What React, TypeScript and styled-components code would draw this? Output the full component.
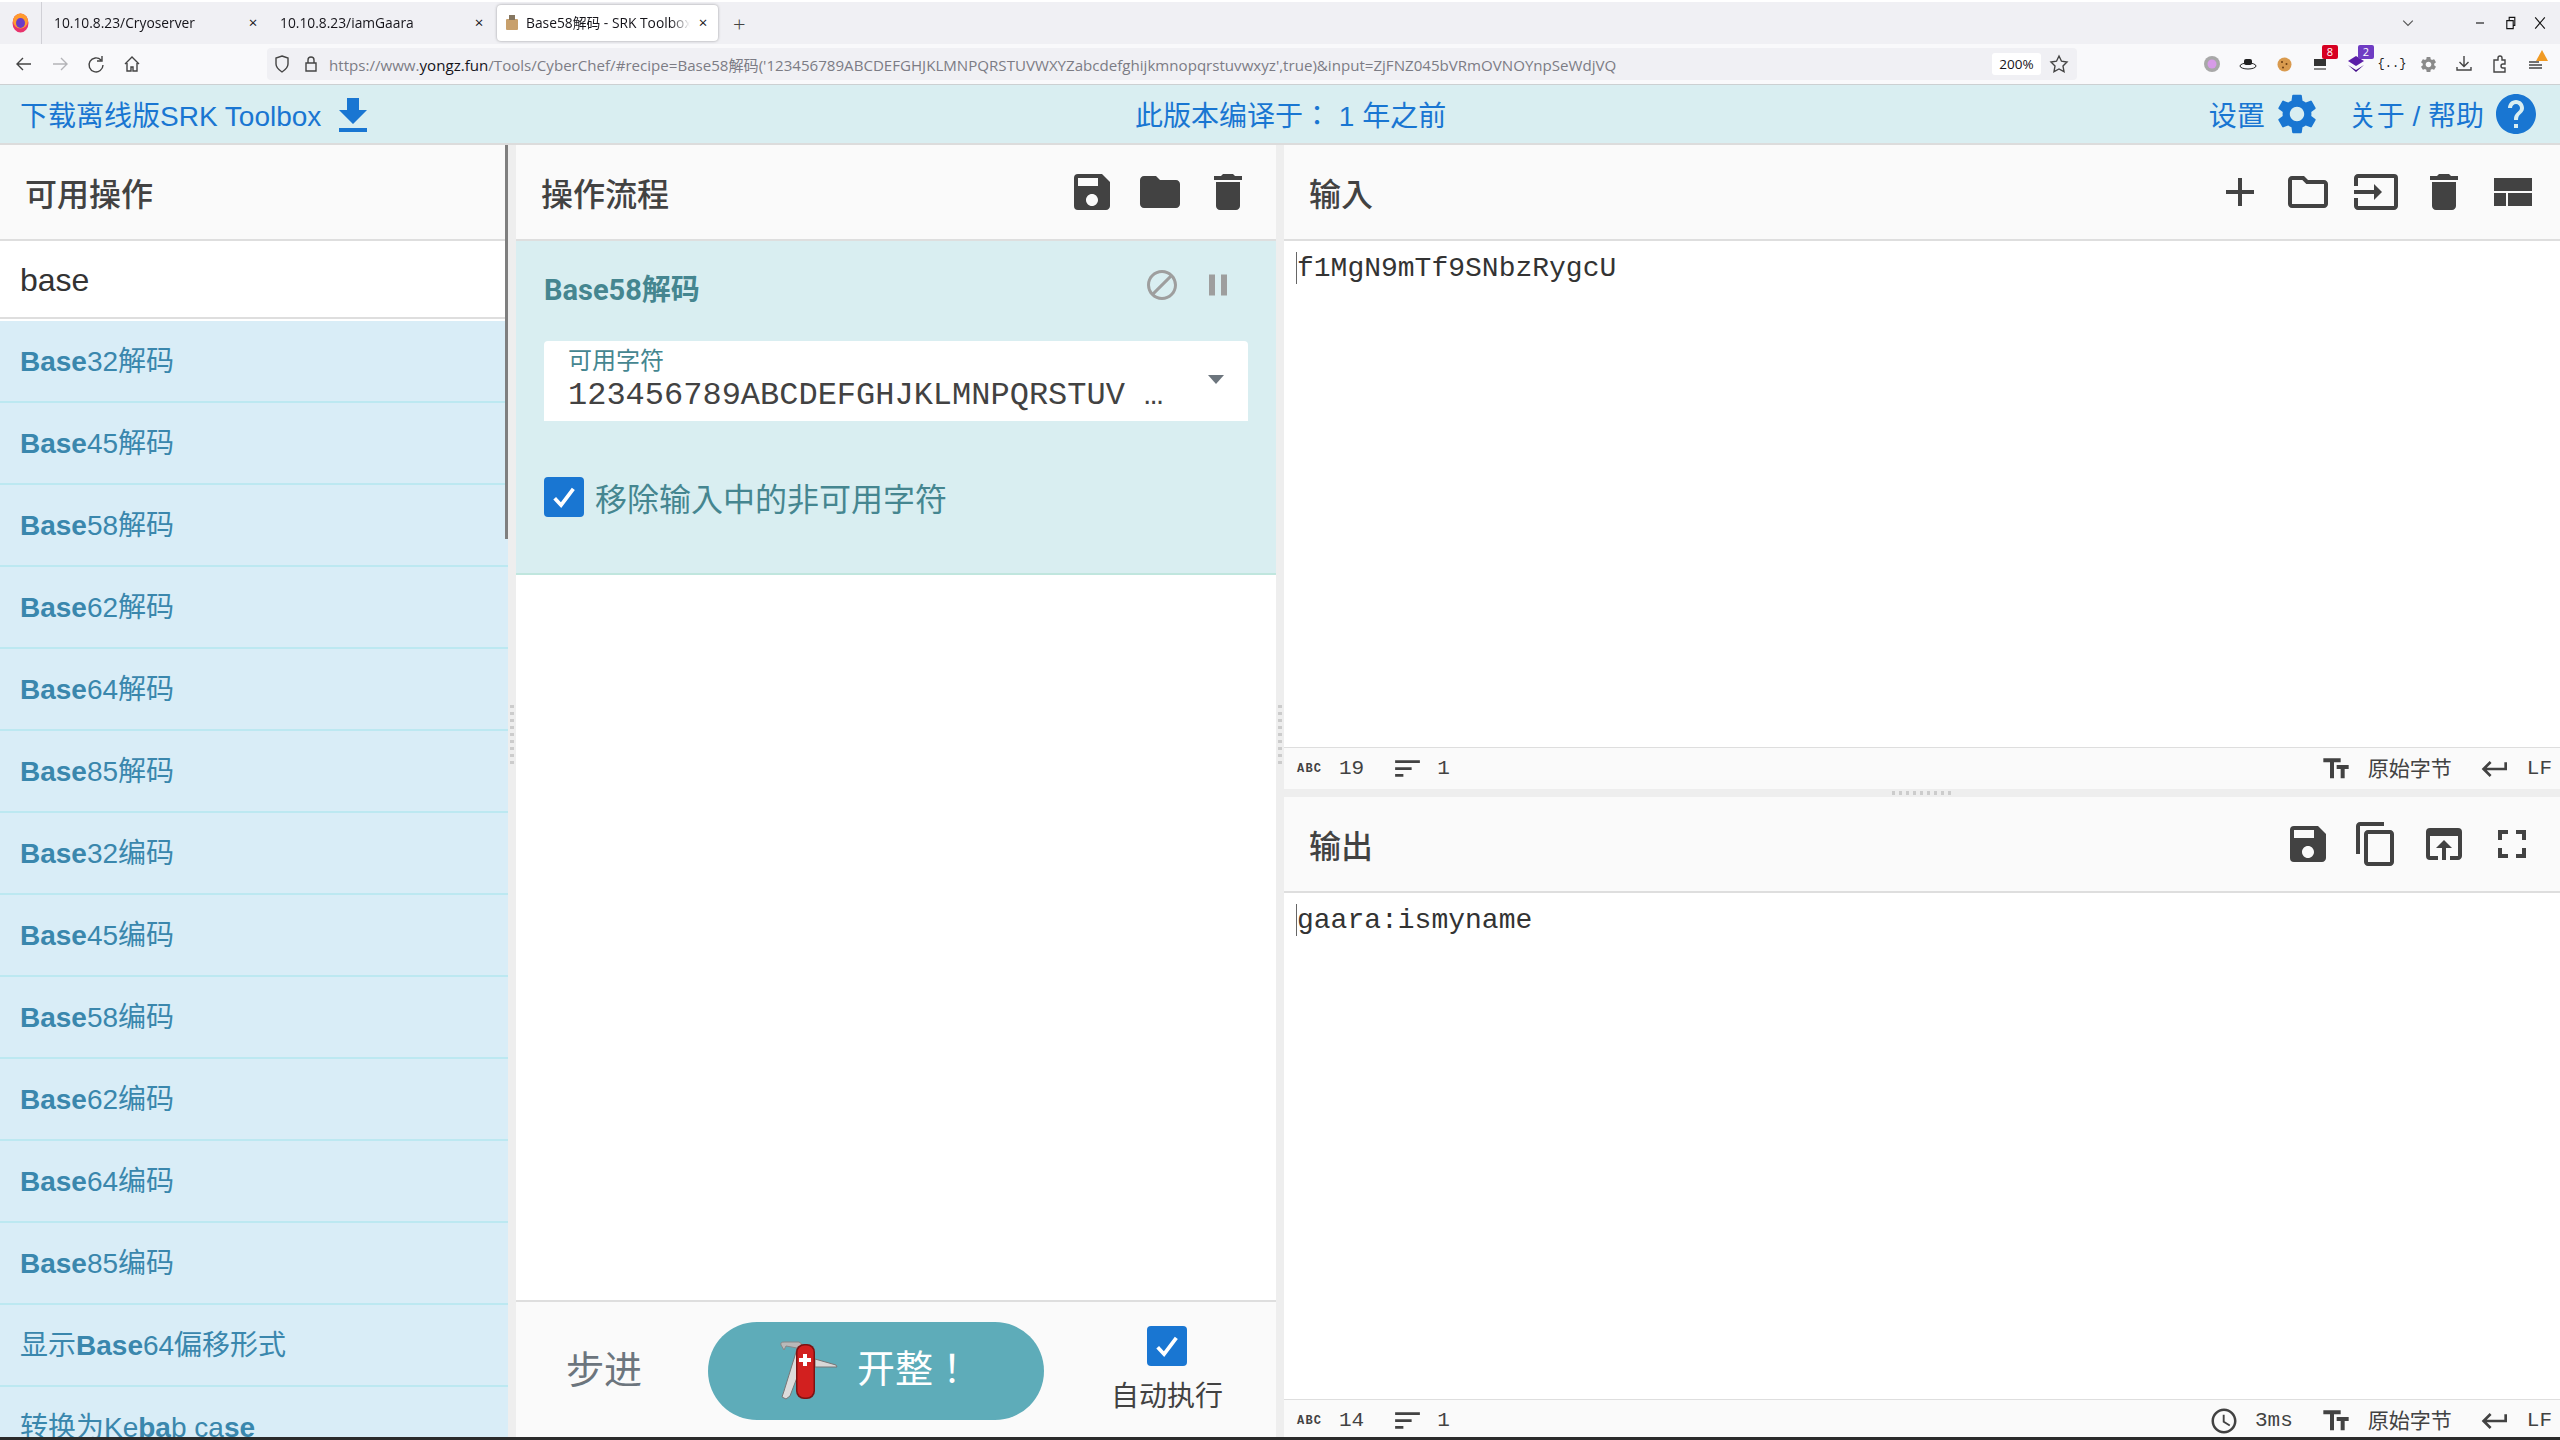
import React from 'react';
import styled, { createGlobalStyle } from 'styled-components';
import {
  MdAccessTime,
  MdAdd,
  MdBlock,
  MdContentCopy,
  MdDelete,
  MdFileDownload,
  MdFolder,
  MdFullscreen,
  MdHelp,
  MdInput,
  MdKeyboardReturn,
  MdOpenInBrowser,
  MdOutlineFolder,
  MdPause,
  MdSave,
  MdSettings,
  MdSort,
  MdTextFields,
} from 'react-icons/md';

const UI_FONT = '"Liberation Sans", "Noto Sans CJK JP", sans-serif';
const TITLE_FONT = 'Roboto, "Noto Sans CJK JP", sans-serif';
const MONO_FONT = '"Liberation Mono", "Noto Sans CJK JP", monospace';
const CHROME_FONT = '"Open Sans", "Noto Sans CJK JP", sans-serif';

const GlobalStyle = createGlobalStyle`
  html, body {
    margin: 0;
    padding: 0;
    background: #fff;
  }
`;

const Page = styled.div`
  width: 2560px;
  height: 1440px;
  overflow: hidden;
  display: flex;
  flex-direction: column;
  font-family: ${UI_FONT};
  background: #2b2b2b;
`;

/* browser chrome */
const TabStrip = styled.div`
  height: 44px;
  flex-shrink: 0;
  display: flex;
  align-items: center;
  background: #f0f0f4;
  border-top: 2px solid #fff;
  box-sizing: border-box;
  font-family: ${CHROME_FONT};
  font-size: 13.8px;
  color: #15141a;
`;

const FirefoxCell = styled.div`
  width: 42px;
  height: 42px;
  box-sizing: border-box;
  display: flex;
  align-items: center;
  justify-content: center;
  border-right: 1px solid #d0d0d6;
`;

const Tab = styled.div<{ $active?: boolean }>`
  width: ${(p) => (p.$active ? '221px' : '226px')};
  height: 36px;
  margin-left: ${(p) => (p.$active ? '3px' : '0')};
  padding: 0 9px 2px ${(p) => (p.$active ? '8px' : '12px')};
  box-sizing: border-box;
  display: flex;
  align-items: center;
  gap: 7px;
  border-radius: 4px;
  background: ${(p) => (p.$active ? '#fff' : 'transparent')};
  box-shadow: ${(p) => (p.$active ? '0 0 3px rgba(0,0,0,0.35)' : 'none')};
`;

const TabTitle = styled.span`
  flex: 1;
  white-space: nowrap;
  overflow: hidden;
  mask-image: linear-gradient(to right, #000 88%, transparent);
`;

const TabClose = styled.span`
  font-size: 15px;
  line-height: 1;
  width: 12px;
  text-align: center;
`;

const NewTab = styled.span`
  margin-left: 15px;
  font-size: 22px;
  font-weight: 300;
  color: #444;
`;

const WindowControls = styled.div`
  margin-left: auto;
  display: flex;
  align-items: center;
  padding-right: 5px;
`;

const ToolBar = styled.div`
  height: 40px;
  flex-shrink: 0;
  display: flex;
  align-items: center;
  background: #f9f9fb;
  border-bottom: 1px solid #ccd0d2;
  box-sizing: content-box;
`;

const NavIcon = styled.span<{ $narrow?: boolean; $trail?: number }>`
  width: ${(p) => (p.$narrow ? '30px' : '36px')};
  height: 24px;
  margin-right: ${(p) => p.$trail ?? 0}px;
  display: flex;
  align-items: center;
  justify-content: center;
`;

const NavIcons = styled.div`
  display: flex;
  width: 267px;
  padding-left: 6px;
  box-sizing: border-box;
`;

const UrlBar = styled.div`
  width: 1810px;
  height: 32px;
  box-sizing: border-box;
  padding: 0 8px 0 5px;
  display: flex;
  align-items: center;
  background: #f0f0f4;
  border-radius: 4px;
`;

const UrlSpacer = styled.span<{ $width: number }>`
  width: ${(p) => p.$width}px;
  flex-shrink: 0;
`;

const UrlText = styled.span`
  flex: 1;
  min-width: 0;
  margin-left: 8px;
  font-family: ${CHROME_FONT};
  font-size: 15.1px;
  color: #7c7c85;
  white-space: nowrap;
  overflow: hidden;

  b {
    font-weight: 400;
    color: #15141a;
  }
`;

const ZoomBadge = styled.span`
  width: 49px;
  height: 22px;
  display: flex;
  align-items: center;
  justify-content: center;
  background: #fff;
  border-radius: 3px;
  font-family: ${CHROME_FONT};
  font-size: 13.5px;
  color: #15141a;
`;

const Extensions = styled.div`
  display: flex;
  align-items: center;
  margin-left: 123px;
  gap: 12px;
`;

const ExtIcon = styled.span`
  position: relative;
  width: 24px;
  height: 24px;
  display: flex;
  align-items: center;
  justify-content: center;
  font-size: 12px;
  color: #222;
  font-family: ${MONO_FONT};
`;

const ExtBadge = styled.span<{ $color: string }>`
  position: absolute;
  top: -7px;
  right: -6px;
  min-width: 14px;
  height: 14px;
  padding: 0 1px;
  border-radius: 2px;
  background: ${(p) => p.$color};
  color: #fff;
  font-family: ${CHROME_FONT};
  font-size: 11px;
  line-height: 14px;
  text-align: center;
`;

const AlertMark = styled.svg`
  position: absolute;
  top: -2px;
  right: 0;
`;

/* app banner */
const Banner = styled.div`
  height: 58px;
  flex-shrink: 0;
  position: relative;
  display: flex;
  align-items: center;
  justify-content: space-between;
  padding: 0 20px 0 20px;
  background: #d9eef1;
  border-bottom: 2px solid #dcdcdc;
  color: #1976d2;
  font-size: 28px;
`;

const BannerGroup = styled.div`
  display: flex;
  align-items: center;
`;

const BannerCentre = styled.div`
  position: absolute;
  left: 1135px;
  top: 0;
  height: 58px;
  display: flex;
  align-items: center;
  white-space: pre;
`;

const BannerLabel = styled.span<{ $lead?: number }>`
  margin-left: ${(p) => p.$lead ?? 0}px;
  margin-right: 8px;
`;

const DownloadIcon = styled(MdFileDownload)`
  margin-top: 4px;
`;

/* main columns */
const Main = styled.div`
  flex: 1;
  min-height: 0;
  display: flex;
  overflow: hidden;
  background: #eee;
`;

const OpsColumn = styled.section`
  position: relative;
  width: 508px;
  flex-shrink: 0;
  display: flex;
  flex-direction: column;
  overflow: hidden;
  background: #fff;
`;

const RecipeColumn = styled.section`
  width: 760px;
  margin: 0 8px;
  flex-shrink: 0;
  display: flex;
  flex-direction: column;
  background: #fff;
`;

const IoColumn = styled.section`
  flex: 1;
  min-width: 0;
  display: flex;
  flex-direction: column;
`;

const Scrollbar = styled.div`
  position: absolute;
  top: 0;
  right: 0;
  width: 3px;
  height: 394px;
  background: #7f7f7f;
`;

const PanelHeader = styled.header`
  height: 94px;
  flex-shrink: 0;
  box-sizing: content-box;
  display: flex;
  align-items: center;
  justify-content: space-between;
  padding: 0 24px 0 25px;
  background: #fafafa;
  border-bottom: 2px solid #dedede;
`;

const PanelTitle = styled.h2`
  margin: 0;
  font-family: ${TITLE_FONT};
  font-size: 32px;
  font-weight: 500;
  color: #424242;
`;

const IconRow = styled.div`
  display: flex;
  gap: 20px;
  color: #424242;

  svg {
    display: block;
    width: 48px;
    height: 48px;
  }
`;

const SearchBox = styled.div`
  height: 74px;
  flex-shrink: 0;
  box-sizing: content-box;
  display: flex;
  align-items: center;
  padding: 2px 0 0 20px;
  border-bottom: 2px solid #dedede;
  font-size: 32px;
  color: #333;
`;

const OpList = styled.ul`
  list-style: none;
  margin: 2px 0 0;
  padding: 0;
`;

const OpItem = styled.li`
  height: 82px;
  box-sizing: border-box;
  padding: 1px 0 0 20px;
  background: #d9edf7;
  border-bottom: 2px solid #bce8f1;
  color: #3a87ad;
  font-size: 28px;
  line-height: 80px;
  white-space: pre;
`;

const RecipeBody = styled.div`
  flex: 1;
  min-height: 0;
`;

const OpCard = styled.div`
  height: 332px;
  box-sizing: content-box;
  background: #d9eef1;
  border-bottom: 2px solid #c0e6de;
  padding: 0 28px;
  display: flex;
  flex-direction: column;
`;

const OpCardHead = styled.div`
  height: 100px;
  display: flex;
  align-items: center;
  justify-content: space-between;
  padding-right: 12px;
`;

const OpName = styled.span`
  font-family: ${TITLE_FONT};
  font-size: 29px;
  font-weight: 700;
  color: #458690;
  position: relative;
  top: -4px;
`;

const OpControls = styled.div`
  display: flex;
  gap: 20px;
  color: #9e9e9e;
  position: relative;
  top: -6px;

  svg {
    display: block;
    width: 36px;
    height: 36px;
  }
`;

const Field = styled.div`
  height: 80px;
  box-sizing: border-box;
  position: relative;
  padding: 7px 24px 0;
  background: #fff;
  border-radius: 4px 4px 0 0;
`;

const FieldLabel = styled.div`
  font-family: ${TITLE_FONT};
  font-size: 24px;
  line-height: 26px;
  color: #458690;
`;

const FieldValue = styled.div`
  margin-top: 4px;
  font-family: ${MONO_FONT};
  font-size: 32px;
  line-height: 36px;
  color: #424242;
  white-space: pre;
`;

const Caret = styled.span`
  position: absolute;
  right: 24px;
  top: 34px;
  width: 0;
  height: 0;
  border-left: 8px solid transparent;
  border-right: 8px solid transparent;
  border-top: 9px solid #6c757d;
`;

const CheckRow = styled.label`
  margin-top: 53px;
  display: flex;
  align-items: center;
  gap: 11px;
  font-family: ${TITLE_FONT};
  font-size: 32px;
  color: #458690;
`;

const CheckMark = styled.span`
  width: 40px;
  height: 40px;
  flex-shrink: 0;
  display: flex;
  align-items: center;
  justify-content: center;
  border-radius: 4px;
  background: #1976d2;
`;

const RecipeFooter = styled.footer`
  height: 135px;
  flex-shrink: 0;
  box-sizing: content-box;
  display: flex;
  align-items: flex-start;
  background: #fafafa;
  border-top: 2px solid #dedede;
  padding-left: 50px;
`;

const StepLabel = styled.span`
  width: 142px;
  margin-top: 46px;
  font-family: ${TITLE_FONT};
  font-size: 38px;
  line-height: 44px;
  color: #6c757d;
`;

const BakeButton = styled.div`
  width: 336px;
  height: 98px;
  margin-top: 20px;
  flex-shrink: 0;
  display: flex;
  align-items: center;
  padding-left: 70px;
  box-sizing: border-box;
  gap: 19px;
  border-radius: 49px;
  background: #5eacb9;
  color: #fff;
  font-family: ${TITLE_FONT};
  font-size: 38px;
`;

const BakeLabel = styled.span`
  position: relative;
  top: -6px;
`;

const AutoBake = styled.div`
  flex: 1;
  margin-top: 24px;
  padding-left: 14px;
  display: flex;
  flex-direction: column;
  align-items: center;
  gap: 12px;
  font-family: ${TITLE_FONT};
  font-size: 28px;
  line-height: 38px;
  color: #424242;
`;

/* input and output */
const IoPanel = styled.div`
  height: 644px;
  flex-shrink: 0;
  display: flex;
  flex-direction: column;
`;

const TextArea = styled.div`
  flex: 1;
  min-height: 0;
  position: relative;
  padding: 9px 0 0 13px;
  background: #fff;
  font-family: ${MONO_FONT};
  font-size: 28px;
  line-height: 38px;
  color: #333;
  white-space: pre;

  &::before {
    content: '';
    position: absolute;
    left: 12px;
    top: 11px;
    width: 1px;
    height: 32px;
    background: #666;
  }
`;

const StatusBar = styled.div`
  height: 41px;
  flex-shrink: 0;
  box-sizing: content-box;
  display: flex;
  align-items: center;
  justify-content: space-between;
  padding: 0 8px 0 13px;
  background: #fafafa;
  border-top: 1px solid #dedede;
  font-family: ${MONO_FONT};
  font-size: 21px;
  color: #424242;
`;

const StatusSide = styled.div`
  display: flex;
  align-items: center;
  gap: 27px;
`;

const StatusItem = styled.span<{ $gap?: number }>`
  display: flex;
  align-items: center;
  gap: ${(p) => p.$gap ?? 16}px;

  svg {
    display: block;
  }
`;

const CjkLabel = styled.span`
  position: relative;
  top: -2px;
`;

const AbcMark = styled.span`
  width: 25px;
  font-size: 12px;
  font-weight: 700;
  letter-spacing: 1.2px;
`;

const SplitGutter = styled.div`
  height: 8px;
  flex-shrink: 0;
  display: flex;
  align-items: center;
  justify-content: center;
  background: #eee;

  &::after {
    content: '';
    width: 60px;
    height: 4px;
    background: repeating-linear-gradient(to right, #ccc 0 3px, transparent 3px 7px);
  }
`;

const ColumnGrip = styled.div<{ $left: number }>`
  position: absolute;
  left: ${(p) => p.$left}px;
  top: 620px;
  width: 4px;
  height: 60px;
  background: repeating-linear-gradient(to bottom, #ccc 0 3px, transparent 3px 7px);
`;

const MainFrame = styled.div`
  position: relative;
  flex: 1;
  min-height: 0;
  display: flex;
  flex-direction: column;
  margin-bottom: 3px;
  overflow: hidden;
`;

const operations: string[][] = [
  ['32', '解码'],
  ['45', '解码'],
  ['58', '解码'],
  ['62', '解码'],
  ['64', '解码'],
  ['85', '解码'],
  ['32', '编码'],
  ['45', '编码'],
  ['58', '编码'],
  ['62', '编码'],
  ['64', '编码'],
  ['85', '编码'],
];

const Tick: React.FC = () => (
  <svg width="28" height="28" viewBox="0 0 24 24" fill="none" stroke="#fff" strokeWidth="3.2">
    <path d="M4 13l5.500 6L20 5" />
  </svg>
);

const LayoutIcon: React.FC = () => (
  <svg viewBox="0 0 48 48" fill="currentColor">
    <rect x="6" y="10" width="38" height="13" />
    <rect x="6" y="25" width="12" height="13" />
    <rect x="20" y="25" width="24" height="13" />
  </svg>
);

const KnifeLogo: React.FC = () => (
  <svg width="60" height="60" viewBox="0 0 60 60">
    <path d="M20 20 L23 10 L19 8 L6 50 L4 56 L8 58 L12 55 L20 34 Z" fill="#dcdcdc" stroke="#777" strokeWidth="1" />
    <path d="M3 4 Q2 1 6 1 L21 1 Q24 2 24 5 L19 7 L8 5 L6 9 Z" fill="#b9b9b9" stroke="#888" strokeWidth="1" />
    <path d="M37 18 L58 24 L59 26 L37 26 Z" fill="#d8d8d8" stroke="#777" strokeWidth="1" />
    <rect x="18" y="3" width="19" height="55" rx="8" fill="#7e1212" />
    <rect x="19.500" y="4.500" width="16" height="52" rx="7" fill="#d2201f" />
    <path d="M25 13h4v4h4v4h-4v4h-4v-4h-4v-4h4z" fill="#fff" />
  </svg>
);

const FirefoxLogo: React.FC = () => (
  <svg width="17" height="20" viewBox="0 0 17 20">
    <ellipse cx="8.500" cy="10" rx="8" ry="9.500" fill="#e8336c" />
    <ellipse cx="8.500" cy="8" rx="7.500" ry="7.500" fill="#ff9a2e" />
    <ellipse cx="8.500" cy="10" rx="4.500" ry="5" fill="#6b3bc7" />
  </svg>
);

const Line: React.FC<{ d: string; stroke?: string; size?: number }> = ({ d, stroke = '#444', size = 20 }) => (
  <svg width={size} height={size} viewBox="0 0 20 20" fill="none" stroke={stroke} strokeWidth="1.4">
    <path d={d} />
  </svg>
);

const ExtensionBar: React.FC = () => (
  <Extensions>
    <ExtIcon>
      <svg width="16" height="16" viewBox="0 0 16 16">
        <circle cx="8" cy="8" r="8" fill="#a8a8a8" />
        <circle cx="8" cy="8" r="4.500" fill="#d79be8" />
      </svg>
    </ExtIcon>
    <ExtIcon>
      <svg width="18" height="12" viewBox="0 0 18 12">
        <ellipse cx="9" cy="8" rx="8" ry="3" fill="none" stroke="#222" />
        <rect x="5" y="1" width="8" height="6" rx="2" fill="#222" />
      </svg>
    </ExtIcon>
    <ExtIcon>
      <svg width="15" height="15" viewBox="0 0 15 15">
        <circle cx="7.500" cy="7.500" r="7" fill="#d99a4e" />
        <circle cx="5" cy="5" r="1" fill="#6a3c12" />
        <circle cx="9.500" cy="7" r="1" fill="#6a3c12" />
        <circle cx="6" cy="10.500" r="1" fill="#6a3c12" />
      </svg>
    </ExtIcon>
    <ExtIcon>
      <svg width="14" height="14" viewBox="0 0 14 14">
        <rect x="1" y="2" width="12" height="7" fill="#333" />
        <rect x="1" y="11" width="12" height="2" fill="#888" />
      </svg>
      <ExtBadge $color="#d70022">8</ExtBadge>
    </ExtIcon>
    <ExtIcon>
      <svg width="18" height="18" viewBox="0 0 18 18">
        <path d="M9 1 L17 6 L9 11 L1 6 Z" fill="#5b1ea8" />
        <path d="M1 10 L9 15 L17 10 L9 17 Z" fill="#45108a" />
      </svg>
      <ExtBadge $color="#6f3cc3">2</ExtBadge>
    </ExtIcon>
    <ExtIcon>{'{..}'}</ExtIcon>
    <ExtIcon>
      <MdSettings size={19} color="#8a8a8a" />
    </ExtIcon>
    <ExtIcon>
      <Line d="M10 2v10M5.500 8l4.500 4.500L14.500 8M3 13v3h14v-3" />
    </ExtIcon>
    <ExtIcon>
      <Line d="M4 6h4V4a2 2 0 0 1 4 0v2h3v4h-2a2 2 0 0 0 0 4h2v4H4z" />
    </ExtIcon>
    <ExtIcon>
      <Line d="M3 8h10M3 11h13M3 14h13" />
      <AlertMark width="12" height="11" viewBox="0 0 12 11">
        <path d="M6 0 L12 11 H0 Z" fill="#f09a24" />
      </AlertMark>
    </ExtIcon>
  </Extensions>
);

const BrowserChrome: React.FC = () => (
  <>
    <TabStrip>
      <FirefoxCell>
        <FirefoxLogo />
      </FirefoxCell>
      <Tab>
        <TabTitle>10.10.8.23/Cryoserver</TabTitle>
        <TabClose>×</TabClose>
      </Tab>
      <Tab>
        <TabTitle>10.10.8.23/iamGaara</TabTitle>
        <TabClose>×</TabClose>
      </Tab>
      <Tab $active>
        <svg width="14" height="16" viewBox="0 0 14 16">
          <rect x="1" y="5" width="12" height="11" rx="1" fill="#c8a06c" />
          <rect x="4" y="1" width="6" height="5" fill="#857660" />
        </svg>
        <TabTitle>Base58解码 - SRK Toolbox</TabTitle>
        <TabClose>×</TabClose>
      </Tab>
      <NewTab>+</NewTab>
      <WindowControls>
        <NavIcon $trail={39}>
          <Line d="M4 7l6 6 6-6" stroke="#555" size={16} />
        </NavIcon>
        <NavIcon $narrow>
          <Line d="M5 10h10" stroke="#111" size={16} />
        </NavIcon>
        <NavIcon $narrow>
          <Line d="M6 7h8v10H6zM9 7V3h7v10h-2" stroke="#111" size={16} />
        </NavIcon>
        <NavIcon $narrow>
          <Line d="M4 3l12 14M16 3L4 17" stroke="#111" size={16} />
        </NavIcon>
      </WindowControls>
    </TabStrip>
    <ToolBar>
      <NavIcons>
        <NavIcon>
          <Line d="M17 10H3M9 4l-6 6 6 6" />
        </NavIcon>
        <NavIcon>
          <Line d="M3 10h14M11 4l6 6-6 6" stroke="#b4b4b8" />
        </NavIcon>
        <NavIcon>
          <Line d="M15 6a7 7 0 1 0 2 5M16 2v5h-5" />
        </NavIcon>
        <NavIcon>
          <Line d="M3 10l7-7 7 7M5 9v8h4v-4h2v4h4V9" />
        </NavIcon>
      </NavIcons>
      <UrlBar>
        <Line d="M10 2l6 2v6c0 3-3 6-6 8-3-2-6-5-6-8V4z" />
        <UrlSpacer $width={9} />
        <Line d="M5 9h10v8H5zM7 9V6a3 3 0 0 1 6 0v3" />
        <UrlText>
          https://www.<b>yongz.fun</b>/Tools/CyberChef/#recipe=Base58解码(&apos;123456789ABCDEFGHJKLMNPQRSTUVWXYZabcdefghijkmnopqrstuvwxyz&apos;,true)&amp;input=ZjFNZ045bVRmOVNOYnpSeWdjVQ
        </UrlText>
        <ZoomBadge>200%</ZoomBadge>
        <UrlSpacer $width={8} />
        <Line d="M10 2l2.500 5.200 5.500.8-4 4 1 5.700-5-2.700-5 2.700 1-5.700-4-4 5.500-.8z" />
      </UrlBar>
      <ExtensionBar />
    </ToolBar>
  </>
);

const AppBanner: React.FC = () => (
  <Banner>
    <BannerGroup>
      <BannerLabel>下载离线版SRK Toolbox</BannerLabel>
      <DownloadIcon size={48} />
    </BannerGroup>
    <BannerCentre>此版本编译于： 1 年之前</BannerCentre>
    <BannerGroup>
      <BannerLabel>设置</BannerLabel>
      <MdSettings size={48} />
      <BannerLabel $lead={28}>关于 / 帮助</BannerLabel>
      <MdHelp size={48} />
    </BannerGroup>
  </Banner>
);

const Operations: React.FC = () => (
  <OpsColumn>
    <Scrollbar />
    <PanelHeader>
      <PanelTitle>可用操作</PanelTitle>
    </PanelHeader>
    <SearchBox>base</SearchBox>
    <OpList>
      {operations.map(([num, kind], i) => (
        <OpItem key={i}>
          <b>Base</b>
          {num}
          {kind}
        </OpItem>
      ))}
      <OpItem>
        显示<b>Base</b>64偏移形式
      </OpItem>
      <OpItem>
        转换为Ke<b>ba</b>b ca<b>se</b>
      </OpItem>
    </OpList>
  </OpsColumn>
);

const Recipe: React.FC = () => (
  <RecipeColumn>
    <PanelHeader>
      <PanelTitle>操作流程</PanelTitle>
      <IconRow>
        <MdSave />
        <MdFolder />
        <MdDelete />
      </IconRow>
    </PanelHeader>
    <RecipeBody>
      <OpCard>
        <OpCardHead>
          <OpName>Base58解码</OpName>
          <OpControls>
            <MdBlock />
            <MdPause />
          </OpControls>
        </OpCardHead>
        <Field>
          <FieldLabel>可用字符</FieldLabel>
          <FieldValue>123456789ABCDEFGHJKLMNPQRSTUV …</FieldValue>
          <Caret />
        </Field>
        <CheckRow>
          <CheckMark>
            <Tick />
          </CheckMark>
          移除输入中的非可用字符
        </CheckRow>
      </OpCard>
    </RecipeBody>
    <RecipeFooter>
      <StepLabel>步进</StepLabel>
      <BakeButton>
        <KnifeLogo />
        <BakeLabel>开整！</BakeLabel>
      </BakeButton>
      <AutoBake>
        <CheckMark>
          <Tick />
        </CheckMark>
        自动执行
      </AutoBake>
    </RecipeFooter>
  </RecipeColumn>
);

const StatusRight: React.FC<{ time?: string }> = ({ time }) => (
  <StatusSide>
    {time && (
      <StatusItem>
        <MdAccessTime size={30} />
        {time}
      </StatusItem>
    )}
    <StatusItem>
      <MdTextFields size={32} />
      <CjkLabel>原始字节</CjkLabel>
    </StatusItem>
    <StatusItem>
      <MdKeyboardReturn size={32} />
      LF
    </StatusItem>
  </StatusSide>
);

const StatusLeft: React.FC<{ length: number }> = ({ length }) => (
  <StatusSide>
    <StatusItem $gap={17}>
      <AbcMark>ABC</AbcMark>
      {length}
    </StatusItem>
    <StatusItem $gap={13}>
      <MdSort size={33} />1
    </StatusItem>
  </StatusSide>
);

const InputOutput: React.FC = () => (
  <IoColumn>
    <IoPanel>
      <PanelHeader>
        <PanelTitle>输入</PanelTitle>
        <IconRow>
          <MdAdd />
          <MdOutlineFolder />
          <MdInput />
          <MdDelete />
          <LayoutIcon />
        </IconRow>
      </PanelHeader>
      <TextArea>f1MgN9mTf9SNbzRygcU</TextArea>
      <StatusBar>
        <StatusLeft length={19} />
        <StatusRight />
      </StatusBar>
    </IoPanel>
    <SplitGutter />
    <IoPanel>
      <PanelHeader>
        <PanelTitle>输出</PanelTitle>
        <IconRow>
          <MdSave />
          <MdContentCopy />
          <MdOpenInBrowser />
          <MdFullscreen />
        </IconRow>
      </PanelHeader>
      <TextArea>gaara:ismyname</TextArea>
      <StatusBar>
        <StatusLeft length={14} />
        <StatusRight time="3ms" />
      </StatusBar>
    </IoPanel>
  </IoColumn>
);

const App: React.FC = () => (
  <Page>
    <GlobalStyle />
    <BrowserChrome />
    <MainFrame>
      <AppBanner />
      <Main>
        <Operations />
        <Recipe />
        <InputOutput />
        <ColumnGrip $left={510} />
        <ColumnGrip $left={1278} />
      </Main>
    </MainFrame>
  </Page>
);

export default App;
